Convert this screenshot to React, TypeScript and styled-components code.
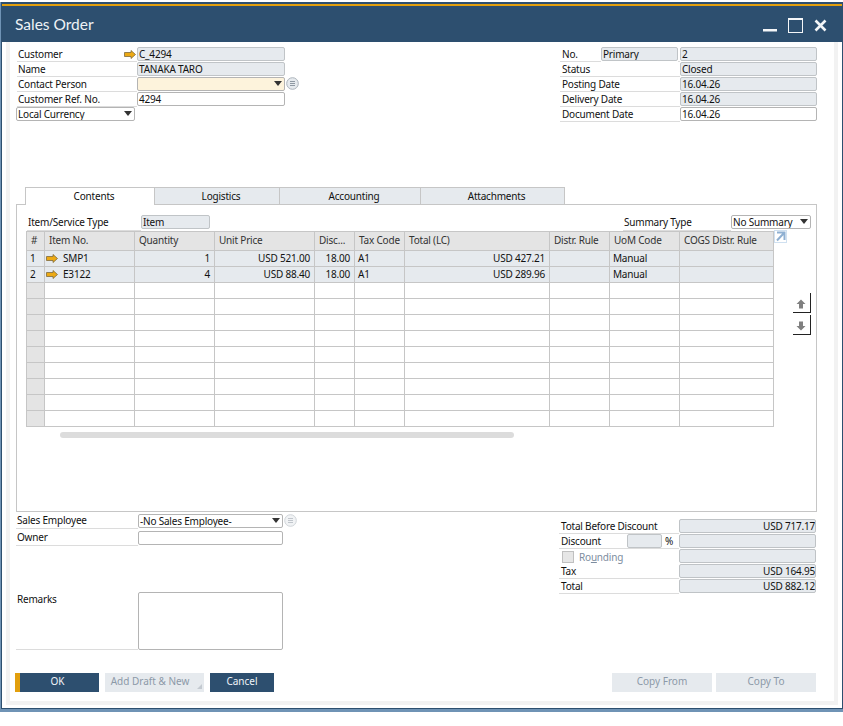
import { Fragment } from "react";
import styled, { createGlobalStyle } from "styled-components";

const GlobalStyle = createGlobalStyle`
  html, body { margin: 0; padding: 0; background: #fff; }
  body { font-family: "Noto Sans", Arial, sans-serif; font-size: 10px; letter-spacing: -0.2px; color: #111; }
  * { box-sizing: border-box; }
`;

const Window = styled.div`
  width: 843px;
  height: 710px;
  margin-top: 2px;
  border-left: 1px solid #6f93b5;
  border-bottom: 3px solid #6f93b5;
`;

const Frame = styled.div`
  height: 100%;
  display: flex;
  flex-direction: column;
  background: #fff;
  border-left: 1px solid #2d4f6f;
  border-right: 1px solid #2d4f6f;
  border-bottom: 1px solid #2d4f6f;
`;

const TitleBar = styled.div`
  height: 40px;
  flex: none;
  display: flex;
  flex-direction: column;
  background: #2d4f6f;
  padding-top: 2px;
  color: #eef2f6;
`;

const Accent = styled.div`
  height: 2px;
  flex: none;
  background: #e29f0d;
`;

const TitleRow = styled.div`
  flex: 1;
  display: flex;
  align-items: center;
  justify-content: space-between;
  padding: 0 15px 0 13px;
`;

const Title = styled.div`
  font-family: Lato, sans-serif;
  font-size: 15.5px;
  font-weight: 400;
  letter-spacing: 0;
`;

const WinButtons = styled.div`
  display: flex;
  align-items: center;
  gap: 11px;
  padding-top: 2px;
`;

const Sheet = styled.div`
  flex: 1;
  margin: 0 4px 3px 4px;
  background: #fff;
  border: 4px solid #f2f2f2;
  border-top: none;
  display: flex;
  flex-direction: column;
  padding: 5px 17px 0 6px;
`;

const Header = styled.div`
  display: flex;
  justify-content: space-between;
  height: 140px;
  padding-left: 1px;
`;

const Col = styled.div<{ $w: number }>`
  width: ${(p) => p.$w}px;
  display: flex;
  flex-direction: column;
`;

const Row = styled.div`
  display: flex;
  height: 15px;
  align-items: stretch;
`;

const Label = styled.div<{ $w?: number; $pad?: number }>`
  width: ${(p) => p.$w ?? 120}px;
  flex: none;
  padding-left: ${(p) => p.$pad ?? 1}px;
  line-height: 15px;
  white-space: nowrap;
  border-bottom: 1px solid #dcdcdc;
`;

const FootLabel = styled(Label)`
  line-height: 13px;
`;

const Field = styled.div<{
  $kind?: "ro" | "edit" | "req";
  $w?: number;
  $right?: boolean;
}>`
  width: ${(p) => (p.$w ? `${p.$w}px` : "auto")};
  flex: ${(p) => (p.$w ? "none" : 1)};
  height: 14px;
  border: 1px solid ${(p) => (p.$kind === "ro" ? "#c0c4c7" : "#b4b4b4")};
  border-radius: 2px;
  background: ${(p) =>
    p.$kind === "ro" ? "#e6eaee" : p.$kind === "req" ? "#fdf3dc" : "#fff"};
  line-height: 12px;
  padding: 0 1px;
  text-align: ${(p) => (p.$right ? "right" : "left")};
  white-space: nowrap;
  overflow: hidden;
  position: relative;
`;

const Caret = styled.span`
  position: absolute;
  right: 2px;
  top: 3px;
  width: 0;
  height: 0;
  border-left: 4px solid transparent;
  border-right: 4px solid transparent;
  border-top: 5px solid #333;
`;

const ArrowSlot = styled.span`
  margin-left: auto;
  margin-right: 1px;
  display: flex;
  align-items: center;
`;

const RowLabel = styled(Label)`
  display: flex;
  align-items: center;
`;

const InfoBadge = styled.span<{ $faded?: boolean }>`
  width: 13px;
  height: 13px;
  flex: none;
  margin: 0 0 0 1px;
  opacity: ${(p) => (p.$faded ? 0.55 : 1)};
`;

const CurrencySelect = styled(Field)`
  width: 119px;
  flex: none;
  margin-left: -1px;
`;

const TabArea = styled.div`
  height: 325px;
  display: flex;
  flex-direction: column;
`;

const Tabs = styled.div`
  display: flex;
  height: 18px;
  padding-left: 9px;
`;

const Tab = styled.div<{ $w: number; $active?: boolean }>`
  width: ${(p) => p.$w}px;
  padding-left: 8px;
  text-align: center;
  line-height: 16px;
  border: 1px solid #c6c6c6;
  border-left: ${(p) => (p.$active ? "1px solid #c6c6c6" : "none")};
  border-bottom: ${(p) => (p.$active ? "none" : "1px solid #c6c6c6")};
  background: ${(p) => (p.$active ? "#fff" : "#e6eaee")};
  position: relative;
  z-index: 1;
`;

const Panel = styled.div`
  height: 308px;
  margin-top: -1px;
  border: 1px solid #c6c6c6;
  padding: 10px 5px 0 9px;
  display: flex;
  flex-direction: column;
`;

const PanelTop = styled.div`
  display: flex;
  justify-content: space-between;
  height: 16px;
  padding-left: 1px;
`;

const PanelPair = styled.div`
  display: flex;
`;

const GridRow = styled.div`
  display: flex;
  flex: 1;
`;

const GridWrap = styled.div`
  width: 748px;
  flex: none;
`;

const Table = styled.div`
  display: grid;
  grid-template-columns: 18px 90px 80px 100px 40px 50px 145px 60px 70px 94px;
  border-left: 1px solid #c6c6c6;
  border-top: 1px solid #c6c6c6;
`;

const Cell = styled.div<{ $head?: boolean; $filled?: boolean; $right?: boolean; $num?: boolean }>`
  height: ${(p) => (p.$head ? 19 : 16)}px;
  border-right: 1px solid #c6c6c6;
  border-bottom: 1px solid #c6c6c6;
  background: ${(p) => (p.$head || p.$num ? "#e4e4e4" : p.$filled ? "#e6eaee" : "#fff")};
  color: ${(p) => (p.$head ? "#333" : "#111")};
  padding: 0 4px ${(p) => (p.$head ? 2 : 1)}px ${(p) => (p.$head ? 4 : 3)}px;
  white-space: nowrap;
  overflow: hidden;
  display: flex;
  align-items: center;
  justify-content: ${(p) => (p.$right ? "flex-end" : "flex-start")};
  gap: 5px;
`;

const CellArrow = styled.span`
  display: flex;
  margin-left: -2px;
`;

const Track = styled.div`
  margin: 5px 0 0 34px;
  width: 454px;
  height: 6px;
  border-radius: 3px;
  background: #dcdcdc;
`;

const GridSide = styled.div`
  flex: 1;
  display: flex;
  flex-direction: column;
  align-items: flex-end;
`;

const ExpandLink = styled.svg`
  align-self: flex-start;
  margin-top: -1px;
`;

const MoveBtn = styled.div<{ $first?: boolean }>`
  width: 18px;
  height: 20px;
  margin-top: ${(p) => (p.$first ? 50 : 2)}px;
  padding: 5px 0 0 3px;
  border-right: 1px solid #222;
  border-bottom: 1px solid #222;
`;

const Bottom = styled.div`
  display: flex;
  justify-content: space-between;
  height: 160px;
`;

const LeftFoot = styled.div`
  width: 290px;
  padding-top: 2px;
`;

const FootRow = styled.div<{ $h?: number; $mt?: number }>`
  display: flex;
  height: ${(p) => p.$h ?? 15}px;
  margin-top: ${(p) => p.$mt ?? 0}px;
`;

const RemarksBox = styled(Field)`
  width: 145px;
  flex: none;
  height: 58px;
`;

const RightFoot = styled.div`
  width: 257px;
  margin-right: 1px;
  padding-top: 7px;
`;

const TotalRow = styled.div`
  display: flex;
  height: 15px;
`;

const TotalLabel = styled.div`
  width: 120px;
  flex: none;
  display: flex;
  align-items: stretch;
  line-height: 14px;
  padding-left: 2px;
  border-bottom: 1px solid #dcdcdc;
`;

const DiscountName = styled.span`
  width: 66px;
`;

const Percent = styled.span`
  margin-left: 3px;
`;

const TotalField = styled(Field)`
  border-color: #bfc3c6;
  padding-right: 0;
`;

const Rounding = styled.div`
  width: 120px;
  flex: none;
  display: flex;
  align-items: center;
  gap: 5px;
  color: #7d8da0;
  padding-left: 3px;
`;

const Check = styled.span`
  width: 12px;
  height: 12px;
  background: #e6e6e6;
  border: 1px solid #c0c0c0;
`;

const Footer = styled.div`
  display: flex;
  justify-content: space-between;
  margin: 1px 1px 0 -1px;
`;

const BtnGroup = styled.div<{ $gap: number }>`
  display: flex;
  gap: ${(p) => p.$gap}px;
`;

const Button = styled.div<{ $w: number; $primary?: boolean; $accent?: boolean; $inset?: number }>`
  width: ${(p) => p.$w}px;
  height: 19px;
  line-height: 17px;
  padding-right: ${(p) => p.$inset ?? 0}px;
  text-align: center;
  letter-spacing: 0;
  color: ${(p) => (p.$primary ? "#f0f4f8" : "#8c99a8")};
  background: ${(p) => (p.$primary ? "#2d4f6f" : "#e6eaee")};
  border-left: ${(p) => (p.$accent ? "5px solid #e29f0d" : "none")};
  position: relative;
`;

const Grip = styled.span`
  position: absolute;
  right: 2px;
  bottom: 3px;
  width: 0;
  height: 0;
  border-left: 5px solid transparent;
  border-bottom: 5px solid #c3c9d0;
`;

function LinkArrow() {
  return (
    <svg width="12" height="9" viewBox="0 0 12 9">
      <path
        d="M0.5 2.5H7V0.5L11.5 4.5L7 8.5V6.5H0.5Z"
        fill="#eca914"
        stroke="#7d6a3c"
        strokeWidth="0.8"
      />
    </svg>
  );
}

function Info({ faded }: { faded?: boolean }) {
  return (
    <InfoBadge $faded={faded}>
      <svg width="13" height="13" viewBox="0 0 13 13">
        <circle cx="6.5" cy="6.5" r="5.8" fill="#e6eaee" stroke="#aab2ba" />
        <path d="M4 4.5H9M4 6.5H9M4 8.5H9" stroke="#8f99a3" fill="none" />
      </svg>
    </InfoBadge>
  );
}

const COLUMNS = [
  "#",
  "Item No.",
  "Quantity",
  "Unit Price",
  "Disc...",
  "Tax Code",
  "Total (LC)",
  "Distr. Rule",
  "UoM Code",
  "COGS Distr. Rule",
];

const LINES = [
  { n: "1", item: "SMP1", qty: "1", price: "USD 521.00", disc: "18.00", tax: "A1", total: "USD 427.21", uom: "Manual" },
  { n: "2", item: "E3122", qty: "4", price: "USD 88.40", disc: "18.00", tax: "A1", total: "USD 289.96", uom: "Manual" },
];

export default function App() {
  return (
    <>
      <GlobalStyle />
      <Window>
        <Frame>
          <TitleBar>
            <Accent />
            <TitleRow>
              <Title>Sales Order</Title>
              <WinButtons>
                <svg width="14" height="16" viewBox="0 0 14 16">
                  <rect x="0" y="12" width="14" height="2.5" fill="#f4f6f8" />
                </svg>
                <svg width="15" height="15" viewBox="0 0 15 15">
                  <rect x="0.5" y="0.5" width="14" height="14" fill="none" stroke="#f4f6f8" />
                  <rect x="0" y="0" width="15" height="2" fill="#f4f6f8" />
                </svg>
                <svg width="13" height="13" viewBox="0 0 13 13">
                  <path d="M1.5 1.5L11.5 11.5M11.5 1.5L1.5 11.5" stroke="#f4f6f8" strokeWidth="2.6" />
                </svg>
              </WinButtons>
            </TitleRow>
          </TitleBar>
          <Sheet>
            <Header>
              <Col $w={283}>
                <Row>
                  <RowLabel>
                    Customer
                    <ArrowSlot>
                      <LinkArrow />
                    </ArrowSlot>
                  </RowLabel>
                  <Field $kind="ro" $w={148}>C_4294</Field>
                </Row>
                <Row>
                  <Label>Name</Label>
                  <Field $kind="ro" $w={148}>TANAKA TARO</Field>
                </Row>
                <Row>
                  <Label>Contact Person</Label>
                  <Field $kind="req" $w={148}>
                    <Caret />
                  </Field>
                  <Info />
                </Row>
                <Row>
                  <Label>Customer Ref. No.</Label>
                  <Field $w={148}>4294</Field>
                </Row>
                <Row>
                  <CurrencySelect>
                    Local Currency
                    <Caret />
                  </CurrencySelect>
                </Row>
              </Col>
              <Col $w={257}>
                <Row>
                  <Label $w={41} $pad={2}>No.</Label>
                  <Field $kind="ro" $w={77}>Primary</Field>
                  <Label $w={2} />
                  <Field $kind="ro">2</Field>
                </Row>
                <Row>
                  <Label $pad={2}>Status</Label>
                  <Field $kind="ro">Closed</Field>
                </Row>
                <Row>
                  <Label $pad={2}>Posting Date</Label>
                  <Field $kind="ro">16.04.26</Field>
                </Row>
                <Row>
                  <Label $pad={2}>Delivery Date</Label>
                  <Field $kind="ro">16.04.26</Field>
                </Row>
                <Row>
                  <Label $pad={2}>Document Date</Label>
                  <Field>16.04.26</Field>
                </Row>
              </Col>
            </Header>
            <TabArea>
              <Tabs>
                <Tab $w={130} $active>Contents</Tab>
                <Tab $w={125}>Logistics</Tab>
                <Tab $w={141}>Accounting</Tab>
                <Tab $w={144}>Attachments</Tab>
              </Tabs>
              <Panel>
                <PanelTop>
                  <PanelPair>
                    <Label $w={114}>Item/Service Type</Label>
                    <Field $kind="ro" $w={69}>Item</Field>
                  </PanelPair>
                  <PanelPair>
                    <Label $w={108}>Summary Type</Label>
                    <Field $w={80}>
                      No Summary
                      <Caret />
                    </Field>
                  </PanelPair>
                </PanelTop>
                <GridRow>
                  <GridWrap>
                    <Table>
                      {COLUMNS.map((c) => (
                        <Cell key={c} $head>{c}</Cell>
                      ))}
                      {LINES.map((l) => (
                        <Fragment key={l.n}>
                          <Cell $filled>{l.n}</Cell>
                          <Cell $filled><CellArrow><LinkArrow /></CellArrow>{l.item}</Cell>
                          <Cell $filled $right>{l.qty}</Cell>
                          <Cell $filled $right>{l.price}</Cell>
                          <Cell $filled $right>{l.disc}</Cell>
                          <Cell $filled>{l.tax}</Cell>
                          <Cell $filled $right>{l.total}</Cell>
                          <Cell $filled />
                          <Cell $filled>{l.uom}</Cell>
                          <Cell $filled />
                        </Fragment>
                      ))}
                      {Array.from({ length: 90 }).map((_, i) => (
                        <Cell key={i} $num={i % 10 === 0} />
                      ))}
                    </Table>
                    <Track />
                  </GridWrap>
                  <GridSide>
                    <ExpandLink width="13" height="13" viewBox="0 0 13 13">
                      <rect x="0.5" y="0.5" width="12" height="12" fill="#fff" stroke="#cfe0f0" />
                      <path d="M3 2.5H10.5V10M10 3L3 10.5" stroke="#8fb0d2" strokeWidth="2" fill="none" />
                    </ExpandLink>
                    <MoveBtn $first>
                      <svg width="10" height="10" viewBox="0 0 10 10">
                        <path d="M5 0.5L9.5 5H7V9.5H3V5H0.5Z" fill="#808080" />
                      </svg>
                    </MoveBtn>
                    <MoveBtn>
                      <svg width="10" height="10" viewBox="0 0 10 10">
                        <path d="M5 9.5L9.5 5H7V0.5H3V5H0.5Z" fill="#808080" />
                      </svg>
                    </MoveBtn>
                  </GridSide>
                </GridRow>
              </Panel>
            </TabArea>
            <Bottom>
              <LeftFoot>
                <FootRow>
                  <FootLabel $w={122}>Sales Employee</FootLabel>
                  <Field $w={145}>
                    -No Sales Employee-
                    <Caret />
                  </Field>
                  <Info faded />
                </FootRow>
                <FootRow $mt={2}>
                  <FootLabel $w={122}>Owner</FootLabel>
                  <Field $w={145} />
                </FootRow>
                <FootRow $h={58} $mt={46}>
                  <Label $w={122}>Remarks</Label>
                  <RemarksBox />
                </FootRow>
              </LeftFoot>
              <RightFoot>
                <TotalRow>
                  <TotalLabel>Total Before Discount</TotalLabel>
                  <TotalField $kind="ro" $right>USD 717.17</TotalField>
                </TotalRow>
                <TotalRow>
                  <TotalLabel>
                    <DiscountName>Discount</DiscountName>
                    <Field $kind="ro" $w={35} />
                    <Percent>%</Percent>
                  </TotalLabel>
                  <TotalField $kind="ro" $right />
                </TotalRow>
                <TotalRow>
                  <Rounding>
                    <Check />
                    <span>Ro<u>u</u>nding</span>
                  </Rounding>
                  <TotalField $kind="ro" $right />
                </TotalRow>
                <TotalRow>
                  <TotalLabel>Tax</TotalLabel>
                  <TotalField $kind="ro" $right>USD 164.95</TotalField>
                </TotalRow>
                <TotalRow>
                  <TotalLabel>Total</TotalLabel>
                  <TotalField $kind="ro" $right>USD 882.12</TotalField>
                </TotalRow>
              </RightFoot>
            </Bottom>
            <Footer>
              <BtnGroup $gap={6}>
                <Button $w={84} $primary $accent $inset={4}>OK</Button>
                <Button $w={99} $inset={9}>
                  Add Draft &amp; New
                  <Grip />
                </Button>
                <Button $w={64} $primary>Cancel</Button>
              </BtnGroup>
              <BtnGroup $gap={4}>
                <Button $w={100}>Copy From</Button>
                <Button $w={100}>Copy To</Button>
              </BtnGroup>
            </Footer>
          </Sheet>
        </Frame>
      </Window>
    </>
  );
}
